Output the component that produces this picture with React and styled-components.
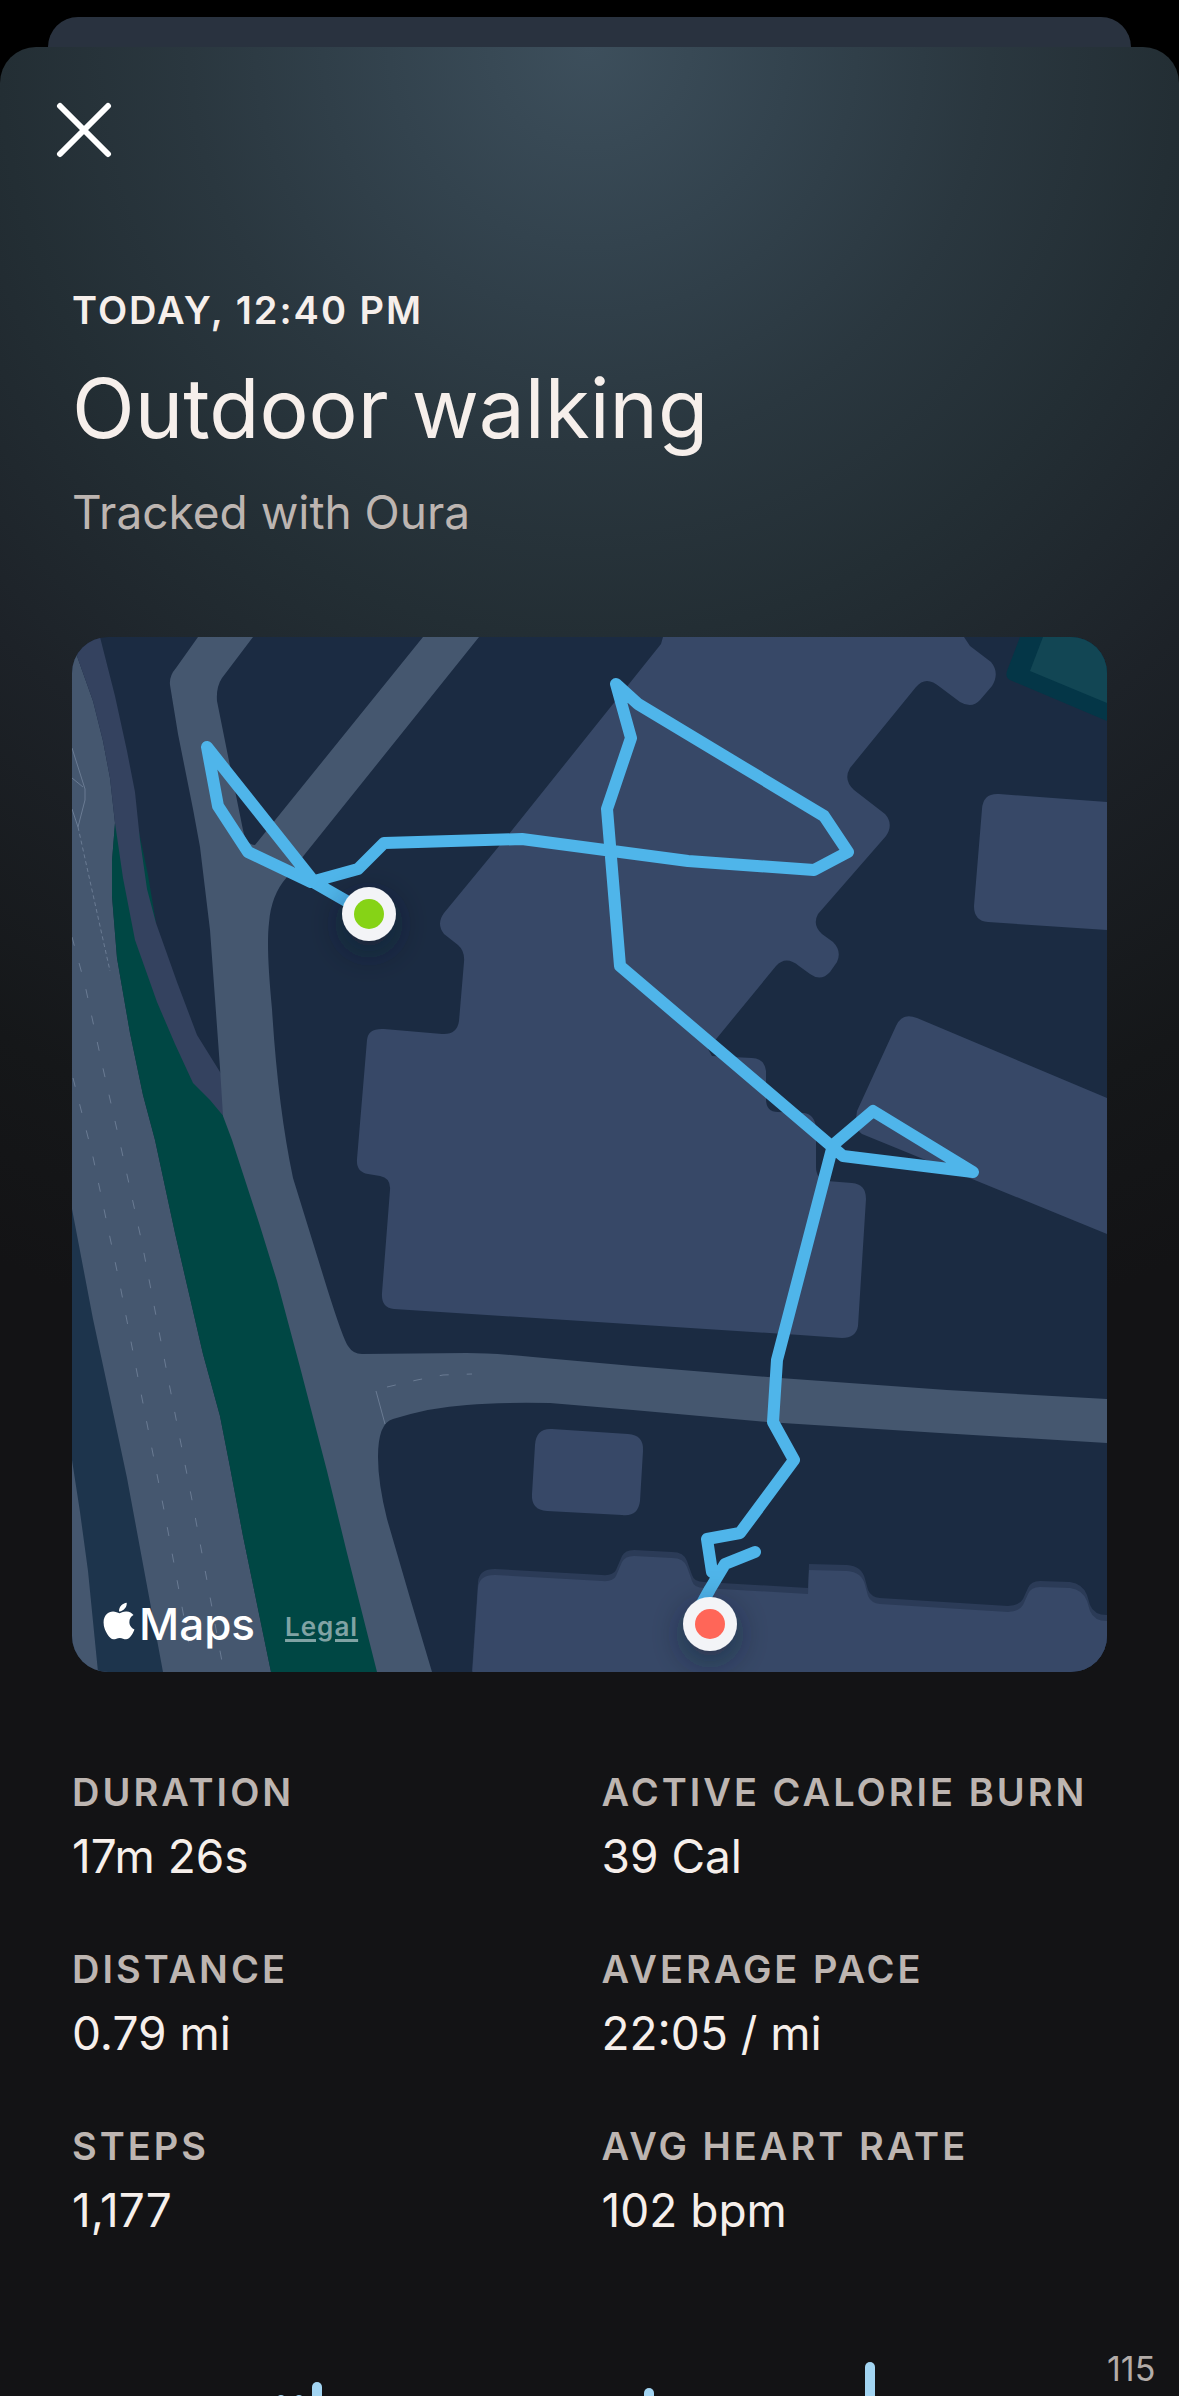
import React from "react";
import styled, { createGlobalStyle } from "styled-components";
import { FaApple } from "react-icons/fa";

const GlobalStyle = createGlobalStyle`
    * {
        box-sizing: border-box;
    }
    body {
        margin: 0;
        background-color: #000000;
        font-family: Inter, "Liberation Sans", sans-serif;
        color: #f6efeb;
    }
`
const Page = styled.div`
    display: flex;
    flex-direction: column;
    min-height: 100vh;
    padding-top: 17px;
    overflow: hidden;
`
const BackSheet = styled.div`
    height: 30px;
    margin: 0 48px;
    border-radius: 32px 32px 0 0;
    background-color: #29323f;
`
const Sheet = styled.main`
    display: flex;
    flex-direction: column;
    flex: 1;
    border-radius: 36px 36px 0 0;
    background: radial-gradient(
        circle at 50% 0,
        #3d4f5c 0,
        #33434e 200px,
        #2a373f 400px,
        #232e34 590px,
        #1d2228 830px,
        #151719 1150px,
        #131315 1350px
    );
`
const TopBar = styled.div`
    display: flex;
    padding: 55px 56px 0;
`
const CloseButton = styled.button`
    display: flex;
    padding: 0;
    border: none;
    background: none;
    color: #ffffff;
    cursor: pointer;
`
const Header = styled.header`
    display: flex;
    flex-direction: column;
    gap: 27px;
    padding: 128px 72px 97px;
`
const Moment = styled.p`
    margin: 0;
    font-size: 38px;
    font-weight: 600;
    line-height: 48px;
    letter-spacing: 2px;
`
const Title = styled.h1`
    margin: 0;
    font-size: 82px;
    font-weight: 400;
    line-height: 96px;
`
const Source = styled.p`
    margin: 0;
    font-size: 46px;
    line-height: 56px;
    color: #bdb5b1;
`
const MapCard = styled.section`
    position: relative;
    margin: 0 72px;
    border-radius: 36px;
    overflow: hidden;
    background-color: #1b2b42;
`
const MapDrawing = styled.svg`
    display: block;
    width: 100%;
`
const Attribution = styled.div`
    position: absolute;
    left: 31px;
    bottom: 20px;
    display: flex;
    align-items: center;
    gap: 30px;
`
const MapsBrand = styled.span`
    display: flex;
    align-items: center;
    gap: 4px;
    font-size: 44px;
    font-weight: 500;
    line-height: 56px;
    color: #ffffff;

    svg {
        width: 32px;
        height: 42px;
        margin-bottom: 6px;
    }
`
const LegalLink = styled.a`
    margin-top: 4px;
    font-size: 26px;
    font-weight: 600;
    letter-spacing: 1px;
    color: #80a3a4;
    text-decoration-thickness: 3px;
    text-underline-offset: 3px;
`
const Stats = styled.dl`
    display: grid;
    grid-template-columns: 1fr 1fr;
    gap: 61px 24px;
    margin: 0;
    padding: 96px 72px 111px;
`
const Stat = styled.div`
    display: flex;
    flex-direction: column;
    gap: 12px;
`
const StatLabel = styled.dt`
    font-size: 38px;
    font-weight: 600;
    line-height: 48px;
    letter-spacing: 3px;
    white-space: nowrap;
    color: #bdb5b1;
`
const StatValue = styled.dd`
    margin: 0;
    font-size: 46px;
    line-height: 56px;
`
const HeartChart = styled.section`
    display: grid;
    grid-template-columns: 1fr 72px;
    padding-left: 72px;
`
const Plot = styled.svg`
    display: block;
    width: 100%;
`
const AxisLabel = styled.span`
    font-size: 34px;
    line-height: 40px;
    color: #b3aca8;
`

const stats = [
    { label: "DURATION", value: "17m 26s" },
    { label: "ACTIVE CALORIE BURN", value: "39 Cal" },
    { label: "DISTANCE", value: "0.79 mi" },
    { label: "AVERAGE PACE", value: "22:05 / mi" },
    { label: "STEPS", value: "1,177" },
    { label: "AVG HEART RATE", value: "102 bpm" },
]

// x is the centre of the bar, top its distance from the upper grid line
const bars = [
    { x: 209, top: 46 },
    { x: 227, top: 46 },
    { x: 245, top: 33 },
    { x: 577, top: 39 },
    { x: 798, top: 13 },
]

const ROAD = "#45576f"
const BUILDING = "#374867"
const PARK = "#004744"

const bottomBuilding = "M400 1040 L406 951 Q407 938 423 938 L530 944 Q541 945 544 939 L550 925 Q553 919 562 919 L600 921 Q612 921 615 930 L620 944 Q622 951 632 951 L736 957 L737 933 L775 934 Q790 935 793 948 L796 959 Q799 966 808 967 L936 975 Q947 975 951 968 L956 957 Q959 950 968 950 L998 951 Q1011 953 1015 964 L1018 974 Q1022 984 1035 984 L1045 1040 Z"

const Marker = ({ x, y, color }) => (
    <g filter="url(#markerShadow)">
        <circle cx={x} cy={y} r="27" fill="#f3f4f7" />
        <circle cx={x} cy={y} r="15" fill={color} />
    </g>
)

const RouteMap = () => {
    return (
        <MapDrawing viewBox="0 0 1035 1035" role="img" aria-label="Walking route">
            <defs>
                <filter id="markerShadow" x="-100%" y="-100%" width="300%" height="300%">
                    <feDropShadow dx="0" dy="10" stdDeviation="16" floodColor="#14202f" floodOpacity="0.5" />
                </filter>
            </defs>

            {/* highway and the strips beside it */}
            <path fill={ROAD} d="M0 0 L5 19 L21 64 L31 104 L38 141 L43 186 L40 224 L40 259 L45 321 L58 396 L71 458 L83 503 L103 596 L115 648 L131 717 L148 779 L158 830 L171 899 L199 1035 L0 1035 Z" />
            <path fill="#1d344c" d="M0 572 L21 682 L38 761 L55 841 L91 1035 L26 1035 L16 934 L8 875 L0 823 Z" />
            <path fill={PARK} d="M43 186 L40 224 L40 259 L45 321 L58 396 L71 458 L83 503 L103 596 L115 648 L131 717 L148 779 L158 830 L171 899 L199 1035 L310 1035 L275 900 L228 715 L165 503 L151 470 Z" />
            <path fill={PARK} d="M66 190 L76 238 L84 286 L70 270 Z" />
            <path fill="#34425f" d="M-4 0 L5 19 L21 64 L31 104 L38 141 L43 186 L51 241 L63 303 L85 365 L103 407 L121 446 L138 463 L153 481 L153 443 L125 398 L105 345 L84 286 L75 252 L68 203 L63 155 L55 114 L43 59 L28 0 Z" />

            {/* streets */}
            <path fill={ROAD} d="M126 0 L104 31 Q97 39 98 48 L106 97 L121 172 L128 210 L138 293 L148 431 L151 479 L160 503 L188 589 L205 644 L228 730 L255 834 L275 916 L305 1035 L360 1035 L338 961 L315 882 Q306 846 306 820 Q306 786 321 782 Q360 770 395 768 Q428 765 478 766 L561 773 L695 785 L868 796 L1035 806 L1035 762 L875 753 L708 741 L561 729 L461 720 Q420 716 395 716 L290 717 Q281 717 276 709 Q271 702 255 651 L221 541 Q206 470 200 372 Q194 310 197 286 Q199 258 215 240 L233 217 L407 0 L351 0 L183 208 Q174 208 171 193 L155 114 L145 64 Q144 50 150 41 L181 0 Z" />

            {/* lane marks */}
            <g fill="none" stroke="#6a7b93" strokeWidth="1">
                <path strokeDasharray="9 18" d="M0 300 L13 348 L30 427 L48 506 L70 606 L96 741 L121 868 L151 1030" />
                <path strokeDasharray="9 18" d="M1 441 L21 520 L48 648 L68 751 L93 878 L118 1013" />
                <path strokeDasharray="4 3" d="M6 190 L38 334" />
                <path d="M0 111 L13 152 L13 163 L6 190 L0 172 M0 141 L11 150" />
                <path d="M304 754 L313 787" />
                <path strokeDasharray="9 18" d="M315 750 L345 743 L371 738 L400 737" />
            </g>

            {/* buildings */}
            <path fill={BUILDING} d="M591 0 L589 7 L437 197 L372 276 Q364 287 372 297 L386 308 Q393 314 392 325 L387 384 Q385 398 370 397 L312 392 Q296 391 295 403 L285 522 Q284 535 296 537 L308 539 Q319 541 318 553 L310 656 Q309 671 322 672 L728 698 L770 701 Q784 701 786 689 L794 562 Q794 547 780 546 L755 544 Q744 542 744 530 L744 490 Q742 477 732 476 L706 475 Q694 475 694 462 L694 434 Q692 421 680 421 L640 419 L636 412 L704 329 Q714 318 727 329 L738 337 Q749 345 758 335 L765 325 Q770 314 761 305 L750 297 Q740 288 746 277 L814 199 Q822 187 813 177 L782 153 Q771 143 778 131 L844 50 Q854 38 868 50 L888 65 Q900 72 908 63 L920 49 Q928 36 919 25 L898 9 L892 0 Z" />
            <path fill={BUILDING} d="M910 172 Q911 156 927 157 L1035 165 L1035 293 L916 285 Q902 284 902 269 Z" />
            <path fill={BUILDING} d="M1035 461 L845 381 Q830 375 824 389 L785 474 Q782 492 790 497 L1035 597 Z" />
            <path fill={BUILDING} d="M463 808 Q464 791 480 792 L556 797 Q572 798 571 814 L568 864 Q566 880 550 878 L475 874 Q459 873 460 857 Z" />
            <path fill="#2b3b57" d={bottomBuilding} transform="translate(0 -6)" />
            <path fill={BUILDING} d={bottomBuilding} />

            {/* sports ground */}
            <path fill="#043647" d="M948 0 L935 34 Q933 40 938 43 L1035 84 L1035 0 Z" />
            <path fill="#124654" d="M971 0 L958 34 L1035 66 L1035 0 Z" />

            <path
                fill="none"
                stroke="#4fb5ea"
                strokeWidth="12"
                strokeLinecap="round"
                strokeLinejoin="round"
                d="M297 277 L243 246 L135 110 L146 169 L176 215 L239 245 L286 232 L312 206 L450 202 L616 224 L742 233 L776 215 L752 179 L566 67 L544 47 L559 101 L535 172 L548 329 L771 519 L901 535 L801 474 L761 508 L705 723 L701 785 L722 823 L668 896 L635 902 L640 935 M683 915 L653 927 L638 952 L628 970"
            />
            <Marker x={297} y={277} color="#86d317" />
            <Marker x={638} y={987} color="#ff6658" />
        </MapDrawing>
    )
}

const App = () => {
    return (
        <Page>
            <GlobalStyle />
            <BackSheet />
            <Sheet>
                <TopBar>
                    <CloseButton aria-label="Close">
                        <svg width="56" height="56" viewBox="0 0 56 56" fill="none" stroke="currentColor" strokeWidth="6" strokeLinecap="round">
                            <path d="M4 4 L52 52 M52 4 L4 52" />
                        </svg>
                    </CloseButton>
                </TopBar>
                <Header>
                    <Moment>TODAY, 12:40 PM</Moment>
                    <Title>Outdoor walking</Title>
                    <Source>Tracked with Oura</Source>
                </Header>
                <MapCard>
                    <RouteMap />
                    <Attribution>
                        <MapsBrand>
                            <FaApple />
                            Maps
                        </MapsBrand>
                        <LegalLink href="#legal">Legal</LegalLink>
                    </Attribution>
                </MapCard>
                <Stats>
                    {stats.map((stat) => {
                        return (
                            <Stat key={stat.label}>
                                <StatLabel>{stat.label}</StatLabel>
                                <StatValue>{stat.value}</StatValue>
                            </Stat>
                        )
                    })}
                </Stats>
                <HeartChart>
                    <Plot viewBox="0 0 1035 47" role="img" aria-label="Heart rate">
                        {bars.map((bar) => (
                            <rect key={bar.x} x={bar.x - 5} y={bar.top} width="10" height="80" rx="5" fill="#a3d5f2" />
                        ))}
                    </Plot>
                    <AxisLabel>115</AxisLabel>
                </HeartChart>
            </Sheet>
        </Page>
    )
}
export default App;
